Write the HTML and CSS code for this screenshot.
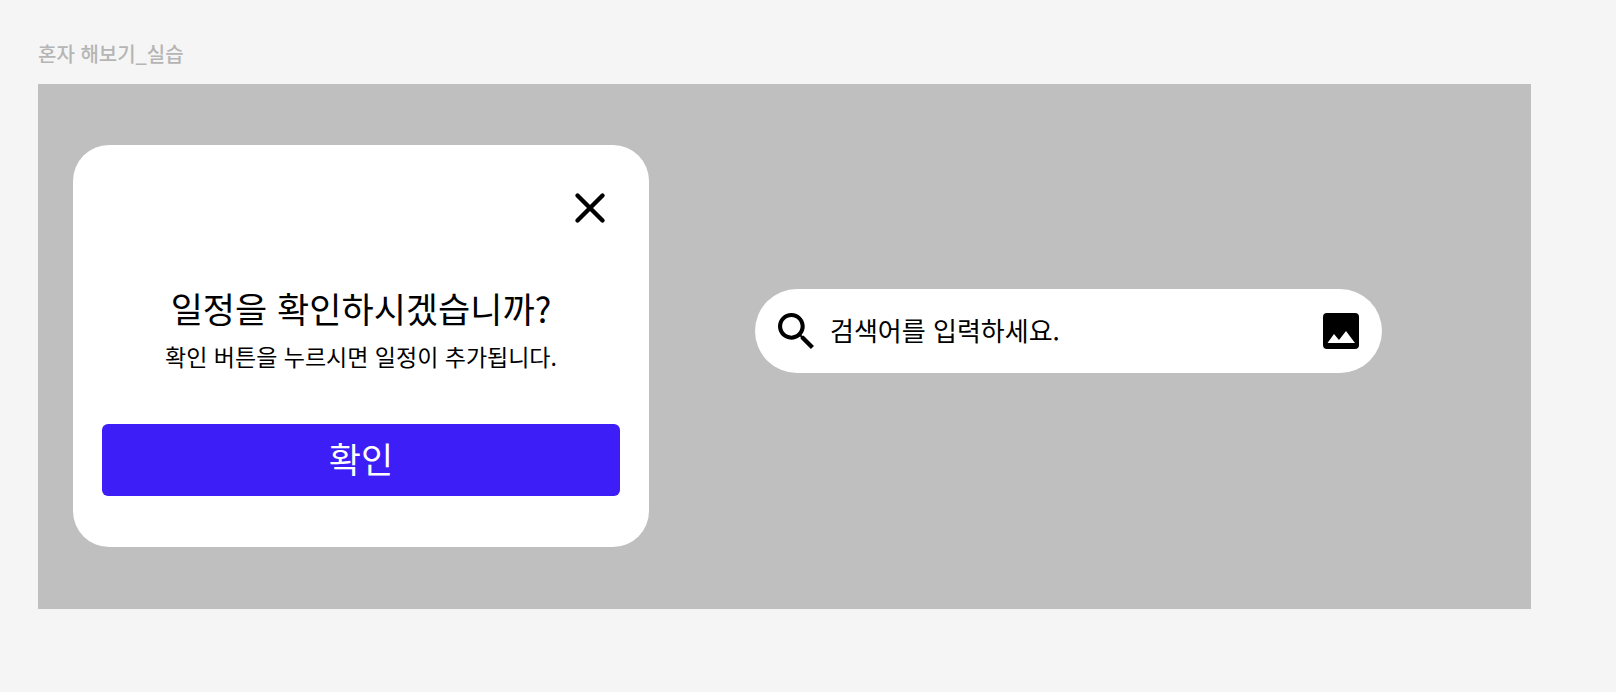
FILE: index.html
```html
<!DOCTYPE html>
<html lang="ko">
<head>
<meta charset="utf-8">
<meta name="viewport" content="width=device-width, initial-scale=1">
<title>혼자 해보기_실습</title>
<link rel="stylesheet" href="styles.css">
</head>
<body>
<main class="page">
  <h1 class="frame-label">혼자 해보기_실습</h1>
  <div class="frame">
    <section class="dialog" role="dialog" aria-labelledby="dialog-title" aria-describedby="dialog-text">
      <button class="close" type="button" aria-label="닫기">
        <svg class="close-icon" viewBox="0 0 32 32" aria-hidden="true"><path d="M3.5 3.5 28.5 28.5M28.5 3.5 3.5 28.5" fill="none" stroke="currentColor" stroke-width="4.4" stroke-linecap="round"/></svg>
      </button>
      <h2 class="dialog-title" id="dialog-title">일정을 확인하시겠습니까?</h2>
      <p class="dialog-text" id="dialog-text">확인 버튼을 누르시면 일정이 추가됩니다.</p>
      <button class="confirm" type="button">확인</button>
    </section>
    <form class="search" role="search">
      <svg class="icon" viewBox="3 3 17.5 17.5" aria-hidden="true"><path d="M15.5 14h-.79l-.28-.27C15.41 12.59 16 11.11 16 9.5 16 5.910 13.090 3 9.500 3S3 5.910 3 9.500 5.910 16 9.500 16c1.610 0 3.090-.59 4.230-1.570l.27.28v.79l5 4.990L20.490 19l-4.990-5zm-6 0C7.010 14 5 11.990 5 9.500S7.010 5 9.500 5 14 7.010 14 9.500 11.990 14 9.500 14z"/></svg>
      <input class="search-input" type="text" placeholder="검색어를 입력하세요." aria-label="검색어">
      <button class="image-button" type="button" aria-label="이미지로 검색">
        <svg class="icon" viewBox="0 0 36 36" aria-hidden="true"><path fill-rule="evenodd" d="M4 0H32a4 4 0 0 1 4 4V32a4 4 0 0 1-4 4H4a4 4 0 0 1-4-4V4a4 4 0 0 1 4-4ZM4.500 30H32L23 18 16 27 11 21Z"/></svg>
      </button>
    </form>
  </div>
</main>
</body>
</html>
```
FILE: styles.css
```css
* {
  box-sizing: border-box;
}

body {
  margin: 0;
  background: #f5f5f5;
  color: #000;
  font-family: "Noto Sans CJK KR", sans-serif;
}

button,
input {
  border: 0;
  padding: 0;
  background: none;
  color: inherit;
  font: inherit;
}

button {
  cursor: pointer;
}

.page {
  padding: 38px 85px 40px 38px;
}

.frame-label {
  margin: 0 0 14px;
  color: #b5b5b5;
  font-size: 20px;
  font-weight: 500;
  line-height: 32px;
}

.frame {
  display: grid;
  grid-template-columns: 576fr 627fr;
  align-items: start;
  column-gap: 106px;
  padding: 61px 149px 62px 35px;
  background: #bfbfbf;
}

.dialog {
  display: flex;
  flex-direction: column;
  padding: 43px 29px 51px;
  border-radius: 36px;
  background: #fff;
  text-align: center;
}

.close {
  align-self: flex-end;
  width: 40px;
  height: 40px;
  margin-right: 10px;
}

.close-icon {
  display: block;
  width: 32px;
  height: 32px;
  margin: 0 auto;
}

.dialog-title {
  margin: 52px 0 0;
  font-size: 35px;
  font-weight: 400;
  line-height: 56px;
}

.dialog-text {
  margin: 0 0 48px;
  font-size: 23px;
  line-height: 40px;
}

.confirm {
  height: 72px;
  padding-bottom: 6px;
  border-radius: 6px;
  background: #3d1ef6;
  color: #fff;
  font-size: 35px;
}

.search {
  display: flex;
  align-items: center;
  gap: 16px;
  height: 84px;
  margin-top: 144px;
  padding: 0 23px;
  border-radius: 42px;
  background: #fff;
}

.icon {
  display: block;
  flex: none;
  width: 36px;
  height: 36px;
}

.search-input {
  flex: 1;
  min-width: 0;
  height: 48px;
  padding-bottom: 3px;
  outline: 0;
  font-size: 26px;
}

.search-input::placeholder {
  color: #000;
  opacity: 1;
}

.image-button {
  flex: none;
}
```
